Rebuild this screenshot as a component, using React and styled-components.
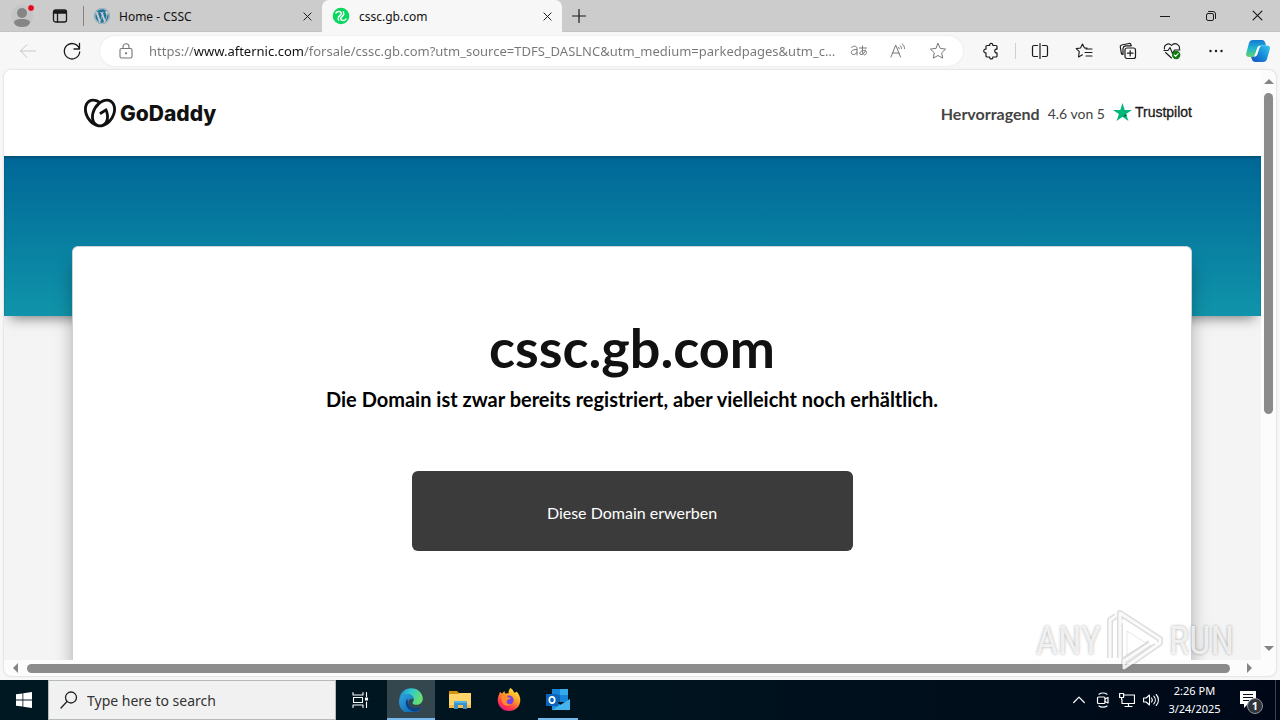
import styled, { createGlobalStyle } from 'styled-components';

import { FaWordpress } from 'react-icons/fa';
import { SiGodaddy } from 'react-icons/si';

const GlobalStyle = createGlobalStyle`
  * {
    box-sizing: border-box;
  }

  body {
    margin: 0;
    font-family: "Noto Sans", "Open Sans", sans-serif;
    color: #111;
  }

  button, input {
    font: inherit;
    color: inherit;
  }

  svg {
    display: block;
    flex-shrink: 0;
  }

  h1, h2, p {
    margin: 0;
  }
`;

const Desktop = styled.div`
  display: flex;
  flex-direction: column;
  height: 100vh;
  background: #f7f7f7;
`;

const TabBar = styled.header`
  display: flex;
  height: 32px;
  background: #ccc;
  border-bottom: 1px solid #c4c4c4;
`;

const IconButton = styled.button`
  display: flex;
  align-items: center;
  justify-content: center;
  flex-shrink: 0;
  width: ${({ $width }) => $width || 44}px;
  padding: 0;
  border: 0;
  background: none;
  color: ${({ $color }) => $color || '#1b1b1b'};
`;

const Tab = styled.div`
  display: flex;
  align-items: center;
  gap: 9px;
  width: ${({ $active }) => ($active ? 240 : 230)}px;
  height: 32px;
  padding: 0 6px 0 ${({ $active }) => ($active ? 10 : 2)}px;
  border-radius: 7px 7px 0 0;
  background: ${({ $active }) => ($active ? '#f7f7f7' : 'none')};
  font-size: 12px;
`;

const TabTitle = styled.span`
  flex: 1;
`;

const TabDivider = styled.span`
  align-self: center;
  width: 1px;
  height: 20px;
  margin: 0 8px 0 7px;
  background: #8a8079;
`;

const WindowControls = styled.div`
  display: flex;
  margin-left: auto;
`;

const Toolbar = styled.nav`
  display: flex;
  align-items: center;
  height: 38px;
  padding: 0 2px 0 6px;
`;

const AddressBar = styled.div`
  display: flex;
  align-items: center;
  flex: 1;
  height: 30px;
  margin: 0 6px;
  padding: 0 5px 0 18px;
  border-radius: 15px;
  background: #fff;
  box-shadow: 0 0 2px #ddd;
  color: #767676;
`;

const AddressInput = styled.input`
  flex: 1;
  min-width: 0;
  margin: 0 3px 0 15px;
  padding: 0;
  border: 0;
  outline: 0;
  background: linear-gradient(90deg, #767676 45px, #111 45px, #111 154px, #767676 154px);
  background-clip: text;
  color: transparent;
  font-size: 13px;
  text-overflow: ellipsis;
`;

const ToolDivider = styled.span`
  width: 1px;
  height: 16px;
  margin: 0 2px;
  background: #d0d0d0;
`;

const Frame = styled.div`
  display: grid;
  grid-template: minmax(0, 1fr) 16px / minmax(0, 1fr) 15px;
  flex: 1;
  min-height: 0;
  margin: 0 4px 4px;
  border-radius: 7px;
  background: #fcfcfc;
  box-shadow: 0 0 2px #bbb;
  overflow: hidden;
`;

const Page = styled.main`
  display: flex;
  flex-direction: column;
  min-height: 0;
  background: #f4f4f4;
  font-family: Lato, sans-serif;
  overflow: hidden;
`;

const SiteHeader = styled.header`
  flex-shrink: 0;
  height: 86px;
  padding: 0 69px 0 80px;
  background: #fff;
  display: flex;
  align-items: center;
  justify-content: space-between;
`;

const Brand = styled.a`
  display: flex;
  align-items: center;
  gap: 4px;
  color: #111;
  font-family: Inter, sans-serif;
  font-size: 21px;
  font-weight: 800;
  text-decoration: none;
`;

const Rating = styled.a`
  display: flex;
  align-items: center;
  gap: 8px;
  padding-top: 2px;
  color: #444;
  font-size: 14px;
  line-height: 18px;
  text-decoration: none;

  strong {
    font-size: 16px;
    font-weight: 700;
  }
`;

const Trustpilot = styled.span`
  display: flex;
  align-items: center;
  gap: 3px;
  padding-bottom: 4px;
  color: #191919;
  font-family: "Liberation Sans", Arial, sans-serif;
  -webkit-text-stroke: .3px #191919;
`;

const Banner = styled.div`
  flex-shrink: 0;
  height: 160px;
  background: linear-gradient(#006797, #1094aa);
  box-shadow: 0 8px 12px -6px rgba(0, 0, 0, .5), inset 0 2px 2px rgba(0, 50, 80, .4);
`;

const Card = styled.section`
  position: relative;
  display: flex;
  flex-direction: column;
  align-items: center;
  flex: 1;
  margin: -70px 69px 0 68px;
  padding-top: 72px;
  border: 1px solid #ccd2d4;
  border-bottom: 0;
  border-radius: 6px 6px 0 0;
  background: #fff;
  box-shadow: 0 18px 18px rgba(0, 0, 0, .28);
`;

const DomainName = styled.h1`
  margin-bottom: 6px;
  font-size: 54px;
  font-weight: 700;
  line-height: 58px;
`;

const Notice = styled.h2`
  color: #000;
  font-size: 20px;
  font-weight: 700;
  line-height: 32px;
`;

const BuyButton = styled.button`
  width: 441px;
  max-width: 100%;
  height: 80px;
  margin-top: 56px;
  padding-top: 3px;
  border: 0;
  border-radius: 6px;
  background: #3b3b3b;
  color: #fff;
  font-size: 16px;
`;

const Scrollbar = styled.div`
  display: flex;
  flex-direction: ${({ $vertical }) => ($vertical ? 'column' : 'row')};
  align-items: center;
  gap: 6px;
  padding: ${({ $vertical }) => ($vertical ? '7px 0' : '0 7px')};
  color: #858585;
`;

const Track = styled.div`
  display: flex;
  flex-direction: inherit;
  flex: 1;
`;

const Thumb = styled.div`
  flex-basis: ${({ $size }) => $size};
  min-width: 9px;
  min-height: 9px;
  border-radius: 5px;
  background: #8b8b8b;
`;

const Taskbar = styled.footer`
  display: flex;
  flex-shrink: 0;
  height: 40px;
  background: linear-gradient(90deg, #001822, #00141f 50%, #000818);
  color: #fff;
`;

const SearchBox = styled.label`
  display: flex;
  align-items: center;
  gap: 9px;
  width: 288px;
  padding-left: 11px;
  border: 1px solid #b4b9bc;
  background: #f1f1f1;
  color: #222;
`;

const SearchInput = styled.input`
  flex: 1;
  min-width: 0;
  padding: 0;
  border: 0;
  outline: 0;
  background: none;
  font-size: 14px;

  &::placeholder {
    color: #333;
    opacity: 1;
  }
`;

const Apps = styled.div`
  display: flex;
  gap: 1px;
  margin-left: 3px;
`;

const AppButton = styled(IconButton)`
  width: 48px;
  background: ${({ $active }) => ($active ? '#34474f' : 'none')};
  box-shadow: ${({ $active }) => ($active ? 'inset 0 -2px #76b9ed' : 'none')};
`;

const OpenButton = styled(AppButton)`
  background: linear-gradient(#76b9ed, #76b9ed) center bottom / 40px 2px no-repeat;
`;

const Tray = styled.div`
  display: flex;
  margin-left: auto;
  padding-right: 4px;
`;

const Clock = styled.div`
  display: flex;
  flex-direction: column;
  justify-content: center;
  width: 63px;
  font-size: 11px;
  line-height: 18px;
  text-align: center;
`;

const ShowDesktop = styled.button`
  width: 2px;
  padding: 0;
  border: 0;
  border-right: 1px solid #38434f;
  background: none;
`;

const Watermark = styled.div`
  position: absolute;
  right: 46px;
  bottom: 48px;
  display: flex;
  align-items: center;
  gap: 5px;
  color: rgba(255, 255, 255, .8);
  font-family: "Liberation Sans Narrow", "Roboto Condensed", "Liberation Sans", sans-serif;
  font-size: 38px;
  line-height: 62px;
  text-shadow: 0 0 3px rgba(0, 0, 0, .35);
  pointer-events: none;
`;

function Icon({
  size = 20, view = 20, width = 1, children,
}) {
  return (
    <svg
      width={size}
      height={size}
      viewBox={`0 0 ${view} ${view}`}
      fill="none"
      stroke="currentColor"
      strokeWidth={width}
      strokeLinecap="round"
      strokeLinejoin="round"
      aria-hidden="true"
    >
      {children}
    </svg>
  );
}

function CloseIcon({ size = 10 }) {
  return (
    <Icon size={size} view={10} width={1.1}>
      <path d="M1 1l8 8M9 1L1 9" />
    </Icon>
  );
}

function ProfileIcon() {
  return (
    <svg width="28" height="28" viewBox="0 0 28 28" aria-hidden="true">
      <circle cx="14" cy="14" r="11" fill="#c6c5c5" />
      <circle cx="14" cy="11" r="5" fill="#858585" />
      <path d="M6 21c0-3 3-4 8-4s8 1 8 4c-1.500 3-4.500 4-8 4s-6.500-1-8-4z" fill="#858585" />
      <circle cx="23" cy="6" r="3.500" fill="#e00b1c" stroke="#d6d6d6" />
    </svg>
  );
}

function AfternicIcon() {
  return (
    <svg width="18" height="18" viewBox="0 0 18 18" aria-hidden="true">
      <circle cx="9" cy="9" r="8.300" fill="#09d75f" />
      <path d="M3.500 6.500C5 4 9 3.800 9.300 6.500 9.500 8 7 8.500 6.300 10.500c-.4 1.200 0 2.200.7 3.200M14.500 11.500c-1.500 2.500-5.500 2.700-5.800 0C8.500 10 11 9.500 11.700 7.500c.4-1.200 0-2.200-.7-3.200" fill="none" stroke="#fff" strokeWidth="1.400" />
    </svg>
  );
}

function CopilotIcon() {
  return (
    <svg width="24" height="24" viewBox="0 0 24 24" aria-hidden="true">
      <defs>
        <linearGradient id="copilotLeft" x1="0" y1="0" x2="0" y2="1">
          <stop stopColor="#1578d4" />
          <stop offset=".5" stopColor="#20b6d0" />
          <stop offset="1" stopColor="#65d36c" />
        </linearGradient>
        <linearGradient id="copilotRight" x1="1" y1="0" x2="0" y2="1">
          <stop stopColor="#35c9ef" />
          <stop offset=".5" stopColor="#168bd9" />
          <stop offset="1" stopColor="#194fbd" />
        </linearGradient>
      </defs>
      <path d="M7 1h9c2 0 2.800 1.500 3.300 3l.7 2.500h-5c-2 0-3 1-3.500 3l-2 5.500c-.7 2-1.700 3-4 3H3c-2.500 0-3.500-1.500-2.700-4L3 4c.6-2 1.800-3 4-3z" fill="url(#copilotLeft)" />
      <path d="M17 23H9.500c-2 0-3.200-1-3.700-3L5 18c3 0 4-1 4.700-3l2-5.500c.7-2 1.700-3 4-3H21c2.500 0 3.500 1.500 2.700 4L21 20c-.6 2-1.800 3-4 3z" fill="url(#copilotRight)" />
      <path d="M12.500 7h2.500c-.8.600-1.300 1.500-1.700 2.500L11.500 15c-.4 1.100-1 2-2 2.500H7.500c.8-.6 1.300-1.400 1.700-2.500L11 9.500c.4-1.200.8-2 1.500-2.500z" fill="#fff" />
    </svg>
  );
}

function EdgeIcon() {
  return (
    <svg width="24" height="24" viewBox="0 0 24 24" aria-hidden="true">
      <defs>
        <linearGradient id="edgeTop" x1="0" x2="1" y2=".3">
          <stop stopColor="#1687d9" />
          <stop offset=".5" stopColor="#2fc7d2" />
          <stop offset="1" stopColor="#66df70" />
        </linearGradient>
        <linearGradient id="edgeBody" x1="0" x2="1" y2="1">
          <stop stopColor="#2fa8e4" />
          <stop offset="1" stopColor="#07549f" />
        </linearGradient>
      </defs>
      <path d="M.3 11.500C.8 5 5.800.2 12 .2c7 0 11.800 5 11.800 10.300 0 4-3 6.300-6.300 6.300-2.500 0-4-.8-4-1.800s1.200-1.300 1.200-3.500c0-3-3-5.500-6.700-5.500-4 0-7 2.500-7.700 5.500z" fill="url(#edgeTop)" />
      <path d="M.3 11.500C1.300 8 4.500 6 8 6c3.700 0 6.700 2.300 6.700 5.300-5-2.500-7 3.200-4 7 2.200 2.600 6.300 3.200 10.300 1.400.8-.3 1.100.3.600.9A11.800 11.800 0 0 1 .3 11.500z" fill="url(#edgeBody)" />
      <path d="M8.500 10.500c-2.500 2.700-2.200 7 .7 10 1.700 1.800 4 2.800 6.500 2.900 2.500-.5 4.700-1.800 6-3.400.2-.5-.3-.7-.8-.5-4.600 1.700-9 .6-10.900-2.500-1.500-2.500-1.500-5-1.500-6.500z" fill="#0b3f87" />
    </svg>
  );
}

function ExplorerIcon() {
  return (
    <svg width="22" height="20" viewBox="0 0 22 20" aria-hidden="true">
      <path d="M0 1h8l2 2h12v3H0z" fill="#d59312" />
      <path d="M0 4h9l2-1h11v15H0z" fill="#ffd56b" />
      <path d="M0 15h22v3H0z" fill="#f5bc43" />
      <path d="M5 19v-8h13v8h-4v-4H9v4z" fill="#3b91cd" />
      <path d="M5 11h13v2H5z" fill="#55b4e7" />
    </svg>
  );
}

function FirefoxIcon() {
  return (
    <svg width="24" height="24" viewBox="0 0 24 24" aria-hidden="true">
      <defs>
        <linearGradient id="foxBody" x1=".8" y1="0" x2=".2" y2="1">
          <stop stopColor="#fff13d" />
          <stop offset=".4" stopColor="#ff9d25" />
          <stop offset=".75" stopColor="#ff374c" />
          <stop offset="1" stopColor="#e21487" />
        </linearGradient>
      </defs>
      <path d="M13.500 0c2 1 3 3 3.500 4.500 1.200.3 2 .2 2.500-1 2.400 2.300 3.800 5.300 3.800 8.700C23.300 18.500 18.300 23 12 23S.7 18.200.7 12C.7 8.500 2.200 6.500 3 4l2 1.500L7.500 3l.5 2.500 3.500-.3c0-2 .6-4 2-5.200z" fill="url(#foxBody)" />
      <circle cx="12" cy="12" r="4.600" fill="#7542e5" />
      <path d="M4.500 7.500c3-1.500 5-.5 6.500 1.700 2 .2 2.700.7 2.500 1.500-1.500.3-3 .8-3.500 2-1.500 2.500 1.500 4 4 3.500-3 3-8 1.500-9-2.500-.5-2-.5-4-.5-6.200z" fill="#ff8b2d" />
    </svg>
  );
}

function OutlookIcon() {
  return (
    <svg width="24" height="22" viewBox="0 0 24 22" aria-hidden="true">
      <path d="M6 0h16v13H6z" fill="#1684d8" />
      <path d="M14 0h8v6h-8z" fill="#36a9eb" />
      <path d="M6 6h8v7H6z" fill="#0f62b2" />
      <path d="M6 11l9 5 9-6v11H6z" fill="#1f8fdb" />
      <path d="M6 21l18-11v11z" fill="#46b4ec" />
      <path d="M0 5h12v12H0z" fill="#0865bd" />
      <ellipse cx="6" cy="11" rx="2.700" ry="3.100" fill="none" stroke="#fff" strokeWidth="1.700" />
    </svg>
  );
}

function BrowserTabs() {
  return (
    <TabBar>
      <IconButton $width={44} aria-label="Profile"><ProfileIcon /></IconButton>
      <IconButton $width={32} aria-label="Tab actions">
        <Icon size={16} view={16} width={1.3}>
          <rect x="1.500" y="2" width="13" height="12" rx="2" />
          <path d="M2 3h12v2H2z" fill="currentColor" />
          <path d="M5.500 5v9" />
        </Icon>
      </IconButton>
      <TabDivider />
      <Tab>
        <FaWordpress size={16} color="#21759b" />
        <TabTitle>Home - CSSC</TabTitle>
        <IconButton $width={18} aria-label="Close Home - CSSC"><CloseIcon size={9} /></IconButton>
      </Tab>
      <Tab $active>
        <AfternicIcon />
        <TabTitle>cssc.gb.com</TabTitle>
        <IconButton $width={18} aria-label="Close cssc.gb.com"><CloseIcon size={9} /></IconButton>
      </Tab>
      <IconButton $width={34} aria-label="New tab">
        <Icon size={14} view={14} width={1.2}><path d="M7 .5v13M.5 7h13" /></Icon>
      </IconButton>
      <WindowControls>
        <IconButton $width={46} aria-label="Minimize">
          <Icon size={10} view={10}><path d="M0 5.500h10" /></Icon>
        </IconButton>
        <IconButton $width={46} aria-label="Restore">
          <Icon size={10} view={10}>
            <rect x=".5" y="2.500" width="7" height="7" rx="1.500" />
            <path d="M2.500.5H7a2.500 2.500 0 0 1 2.500 2.500v4.500" />
          </Icon>
        </IconButton>
        <IconButton $width={46} aria-label="Close window"><CloseIcon size={11} /></IconButton>
      </WindowControls>
    </TabBar>
  );
}

function BrowserToolbar() {
  return (
    <Toolbar>
      <IconButton $color="#c6c6c6" aria-label="Back">
        <Icon><path d="M17.500 10h-15M9 3.500L2.500 10 9 16.500" /></Icon>
      </IconButton>
      <IconButton aria-label="Refresh">
        <Icon width={1.3}><path d="M17.400 8a7.700 7.700 0 1 0 .3 3M17.500 2.500V8H12" /></Icon>
      </IconButton>
      <AddressBar>
        <Icon size={16} view={16} width={1.1}>
          <rect x="2" y="5.500" width="12" height="9.500" rx="1.500" />
          <path d="M5 5.500V3.700a3 3 0 0 1 6 0v1.800" />
          <circle cx="8" cy="10.300" r=".6" fill="currentColor" />
        </Icon>
        <AddressInput
          aria-label="Address"
          defaultValue="https://www.afternic.com/forsale/cssc.gb.com?utm_source=TDFS_DASLNC&utm_medium=parkedpages&utm_campaign=x_corp_tdfs"
        />
        <IconButton $width={38} $color="#777" aria-label="Translate">
          <Icon size={18} view={18}>
            <path d="M1.500 5.500c1-1.800 5.500-2 5.500.8V13M7 7.500c-3 0-5.700.6-5.700 3 0 3 4.700 2.500 5.700-.2" />
            <path d="M9.500 6h7M12.500 4c-.2 4 0 6 .5 8.500M15.500 8c-.5 2.500-2.500 4.500-4.500 4.500-2.500 0-1-4 2.500-4 4 0 4 3.500 1 4.500" />
          </Icon>
        </IconButton>
        <IconButton $width={40} $color="#777" aria-label="Read aloud">
          <Icon size={18} view={18}>
            <path d="M2 15L6.700 3 11.500 15M3.500 11h6.500M11 3.500c1 .8 1.500 1.700 1.500 3M13.200 1.800c1.500 1.200 2.300 2.700 2.300 4.700M9.500 5.300c.5.400.8.900.8 1.500" />
          </Icon>
        </IconButton>
        <IconButton $width={40} $color="#777" aria-label="Add to favorites">
          <Icon size={18} view={18}>
            <path d="M9 1.500l2.300 4.900 5.300.7-3.900 3.700 1 5.300L9 13.500l-4.700 2.600 1-5.300-3.900-3.700 5.300-.7z" />
          </Icon>
        </IconButton>
      </AddressBar>
      <IconButton aria-label="Extensions">
        <Icon size={18} view={18} width={1.2}>
          <path d="M5 3.500h2.700c-.6-2.800 3.700-2.800 3.100 0H14a1 1 0 0 1 1 1v2.700c-3-.9-3 4.500 0 3.600v3.200a1 1 0 0 1-1 1h-3.200c.6 2.600-3.700 2.600-3.100 0H5a1 1 0 0 1-1-1v-3.200c-3 .6-3-4.200 0-3.600V4.500a1 1 0 0 1 1-1z" />
        </Icon>
      </IconButton>
      <ToolDivider />
      <IconButton aria-label="Split screen">
        <Icon size={18} view={18} width={1.2}>
          <path d="M9 1.500v15M6.500 3.500H3A1.500 1.500 0 0 0 1.500 5v8A1.500 1.500 0 0 0 3 14.500h3.500M11.500 3.500H15A1.500 1.500 0 0 1 16.500 5v8a1.500 1.500 0 0 1-1.500 1.500h-3.500" />
        </Icon>
      </IconButton>
      <IconButton aria-label="Favorites">
        <Icon size={18} view={18} width={1.1}>
          <path d="M12 6H9.500L7.500 2 5.500 6l-4.300.6 3.100 3-.8 5.300 4-2.100M11 7h6M10 10.500h7M11 14h6" />
        </Icon>
      </IconButton>
      <IconButton aria-label="Collections">
        <Icon size={18} view={18} width={1.2}>
          <rect x="6" y="6" width="10.500" height="10.500" rx="2" />
          <path d="M11.200 8.500v5.500M8.500 11.200H14M4 12.500c-1 0-1.500-.6-1.700-1.500l-1-6c-.2-1 .4-1.800 1.300-2L10 1.500c1-.2 1.800.4 2 1.300l.2 1H6.500A3 3 0 0 0 4 6.500z" />
        </Icon>
      </IconButton>
      <IconButton aria-label="Browser essentials">
        <Icon size={18} view={18} width={1.1}>
          <path d="M1.500 7c-1-4 4-7 7-3.500C12-.5 17.500 3 16.300 7M2.500 10.500L8.500 16M1 8.500h4L7 5.500l2.500 6 2-3.500h5.500" />
          <circle cx="13.200" cy="13" r="4.200" fill="#107c10" stroke="none" />
          <path d="M11.300 13l1.300 1.300 2.500-2.800" stroke="#fff" />
        </Icon>
      </IconButton>
      <IconButton aria-label="Settings and more">
        <Icon size={18} view={18}>
          <g fill="currentColor" stroke="none">
            <circle cx="3.500" cy="9" r="1.200" />
            <circle cx="9" cy="9" r="1.200" />
            <circle cx="14.500" cy="9" r="1.200" />
          </g>
        </Icon>
      </IconButton>
      <IconButton $width={40} aria-label="Copilot"><CopilotIcon /></IconButton>
    </Toolbar>
  );
}

function ForSalePage() {
  return (
    <Page>
      <SiteHeader>
        <Brand href="#home">
          <SiGodaddy size={32} />
          GoDaddy
        </Brand>
        <Rating href="#reviews">
          <strong>Hervorragend</strong>
          <span>4.6 von 5</span>
          <Trustpilot>
            <svg width="19" height="18" viewBox="0 0 19 18" aria-hidden="true">
              <path d="M9.500 0l2.200 6.900H19l-5.900 4.200 2.300 6.900-5.900-4.300L3.600 18l2.300-6.900L0 6.900h7.300z" fill="#00b67a" />
              <path d="M13.600 12.700l-.5-1.600-3.600 2.600z" fill="#005128" />
            </svg>
            Trustpilot
          </Trustpilot>
        </Rating>
      </SiteHeader>
      <Banner />
      <Card>
        <DomainName>cssc.gb.com</DomainName>
        <Notice>Die Domain ist zwar bereits registriert, aber vielleicht noch erhältlich.</Notice>
        <BuyButton>Diese Domain erwerben</BuyButton>
      </Card>
    </Page>
  );
}

function Arrow({ d }) {
  return (
    <svg width="10" height="10" viewBox="0 0 10 10" fill="currentColor" aria-hidden="true">
      <path d={d} />
    </svg>
  );
}

function WindowsTaskbar() {
  return (
    <Taskbar>
      <IconButton $width={48} $color="#fff" aria-label="Start">
        <svg width="16" height="16" viewBox="0 0 16 16" fill="currentColor" aria-hidden="true">
          <path d="M0 2.300L6.500 1.400v6.200H0zM7.300 1.300L16 0v7.600H7.300zM0 8.400h6.500v6.200L0 13.700zM7.300 8.400H16V16l-8.700-1.300z" />
        </svg>
      </IconButton>
      <SearchBox>
        <Icon size={18} view={18} width={1.3}>
          <circle cx="11" cy="6.500" r="5.500" />
          <path d="M7 10.500L1 17" />
        </Icon>
        <SearchInput aria-label="Search" placeholder="Type here to search" />
      </SearchBox>
      <IconButton $width={48} $color="#fff" aria-label="Task view">
        <Icon size={18} view={18} width={1.1}>
          <path d="M2 1.500v2.500h10V1.500M2 16.500V14h10v2.500M2.500 6.500h9v5h-9zM15.500 1.500v4M15.500 11v5.500" />
          <rect x="14.500" y="7" width="2" height="2" fill="currentColor" />
        </Icon>
      </IconButton>
      <Apps>
        <AppButton $active aria-label="Microsoft Edge"><EdgeIcon /></AppButton>
        <AppButton aria-label="File Explorer"><ExplorerIcon /></AppButton>
        <AppButton aria-label="Firefox"><FirefoxIcon /></AppButton>
        <OpenButton aria-label="Outlook"><OutlookIcon /></OpenButton>
      </Apps>
      <Tray>
        <IconButton $width={24} $color="#fff" aria-label="Show hidden icons">
          <Icon size={12} view={12} width={1.2}><path d="M.7 8.500L6 3.200l5.300 5.300" /></Icon>
        </IconButton>
        <IconButton $width={24} $color="#fff" aria-label="Meet now">
          <Icon size={16} view={16} width={1.2}>
            <rect x="2.500" y="5" width="7.500" height="6.500" rx="1" />
            <path d="M10 7l3-1.500v5.500L10 9.500M4 2.200c2-1.600 6-1.600 8 0M4 14c2 1.600 6 1.600 8 0" />
          </Icon>
        </IconButton>
        <IconButton $width={24} $color="#fff" aria-label="Network">
          <Icon size={16} view={16} width={1.2}>
            <path d="M5.500 3h10v8.500H3V7.500M9.500 11.500v3M6 14.500h7M.6 1.500h4v4h-4zM2.600 5.500v2" />
          </Icon>
        </IconButton>
        <IconButton $width={24} $color="#fff" aria-label="Volume">
          <Icon size={16} view={16} width={1.1}>
            <path d="M.6 6h2.500L6.500 3v10L3.100 10H.6zM8.500 6c1 1.200 1 2.800 0 4M10.800 4.200c2 2.200 2 5.400 0 7.600M13.200 2.500c3 3.200 3 7.800 0 11" />
          </Icon>
        </IconButton>
        <Clock>
          <time>2:26 PM</time>
          <time>3/24/2025</time>
        </Clock>
        <IconButton $width={48} $color="#fff" aria-label="1 new notification">
          <svg width="26" height="28" viewBox="0 0 26 28" aria-hidden="true">
            <path d="M3 5h16v13H11l-4 4v-4H3z" fill="#fff" />
            <path d="M6 8.500h10M6 11.500h10M6 14.500h6" stroke="#00101c" />
            <circle cx="18" cy="20" r="7.500" fill="#30353b" stroke="#8d9298" />
            <text x="18" y="24" fill="#fff" fontSize="11" fontWeight="700" textAnchor="middle">1</text>
          </svg>
        </IconButton>
        <ShowDesktop aria-label="Show desktop" />
      </Tray>
    </Taskbar>
  );
}

export default function App() {
  return (
    <Desktop>
      <GlobalStyle />
      <BrowserTabs />
      <BrowserToolbar />
      <Frame>
        <ForSalePage />
        <Scrollbar $vertical>
          <Arrow d="M0 7l5-5 5 5z" />
          <Track><Thumb $size="59%" /></Track>
          <Arrow d="M0 3l5 5 5-5z" />
        </Scrollbar>
        <Scrollbar>
          <Arrow d="M7 0L2 5l5 5z" />
          <Track><Thumb $size="calc(100% - 8px)" /></Track>
          <Arrow d="M3 0l5 5-5 5z" />
        </Scrollbar>
      </Frame>
      <WindowsTaskbar />
      <Watermark>
        <span>ANY</span>
        <svg width="58" height="62" viewBox="0 0 58 62" fill="none" strokeLinejoin="round" aria-hidden="true">
          <g stroke="rgba(120,120,120,.25)" strokeWidth="6">
            <path d="M4 48V10l6-4M14 48V3l40 26v4L18 58v-8l26-17" />
          </g>
          <g stroke="rgba(255,255,255,.85)" strokeWidth="3">
            <path d="M4 48V10l6-4M14 48V3l40 26v4L18 58v-7l27-18M14 3v7l38 24" />
          </g>
          <path d="M21 21v24l19-12z" fill="rgba(255,255,255,.8)" stroke="rgba(140,140,140,.2)" />
        </svg>
        <span>RUN</span>
      </Watermark>
    </Desktop>
  );
}
